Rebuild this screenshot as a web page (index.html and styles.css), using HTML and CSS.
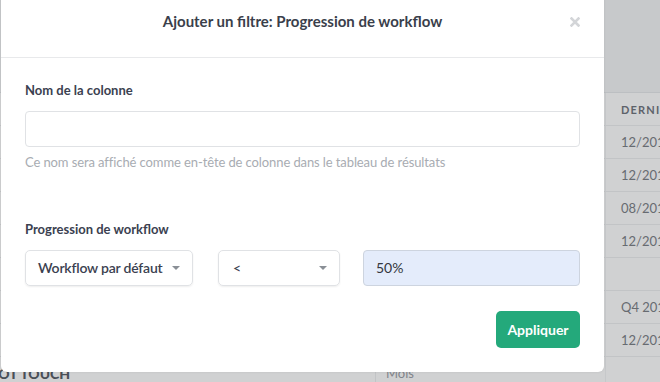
FILE: index.html
```html
<!DOCTYPE html>
<html lang="fr">
<head>
    <meta charset="UTF-8">
    <meta name="viewport" content="width=device-width, initial-scale=1.0">
    <title>Ajouter un filtre</title>
    <link rel="stylesheet" href="styles.css">
</head>
<body>
    <div class="page">
        <div class="band"></div>
        <div class="grid">
            <div class="cell"></div><div class="cell"></div><div class="cell head">Dernière mise à jour</div>
            <div class="cell"></div><div class="cell"></div><div class="cell">12/2018</div>
            <div class="cell"></div><div class="cell"></div><div class="cell">12/2018</div>
            <div class="cell"></div><div class="cell"></div><div class="cell">08/2018</div>
            <div class="cell"></div><div class="cell"></div><div class="cell">12/2018</div>
            <div class="cell"></div><div class="cell"></div><div class="cell"></div>
            <div class="cell"></div><div class="cell"></div><div class="cell">Q4 2018</div>
            <div class="cell"></div><div class="cell"></div><div class="cell">12/2018</div>
            <div class="cell strong">DO NOT TOUCH</div><div class="cell muted">Mois</div><div class="cell"></div>
        </div>
    </div>

    <div class="modal">
        <div class="modal-header">
            <h3>Ajouter un filtre: Progression de workflow</h3>
            <span class="close">
                <svg width="10" height="10" viewBox="0 0 10 10"><path d="M1.5 1.5 L8.5 8.5 M8.5 1.5 L1.5 8.5" stroke="#d3d5d8" stroke-width="2.6" stroke-linecap="square"/></svg>
            </span>
        </div>
        <div class="modal-body">
            <label for="colname">Nom de la colonne</label>
            <input type="text" id="colname" class="field">
            <p class="help">Ce nom sera affiché comme en-tête de colonne dans le tableau de résultats</p>

            <label class="second">Progression de workflow</label>
            <div class="row">
                <div class="select wf">Workflow par défaut <span class="caret"></span></div>
                <div class="select op">&lt; <span class="caret"></span></div>
                <div class="field value">50%</div>
            </div>

            <div class="actions">
                <button type="button">Appliquer</button>
            </div>
        </div>
    </div>
</body>
</html>
```

FILE: styles.css
```css
* {
    box-sizing: border-box;
}
body {
    margin: 0;
    font-family: Lato, "Open Sans", sans-serif;
    background-color: #d0d1d2;
    overflow: hidden;
    height: 382px;
}
.page {
    width: 660px;
}
.band {
    height: 93px;
    background-color: #c7c9cb;
    border-bottom: 1px solid #bcbfc2;
}
.grid {
    display: grid;
    grid-template-columns: 375px 230px 1fr;
}
.cell {
    height: 33px;
    border-bottom: 1px solid #c2c4c6;
    font-size: 13px;
    color: #676b71;
    line-height: 33px;
    padding-left: 15px;
    white-space: nowrap;
    overflow: hidden;
}
.cell:nth-child(3n+2) {
    border-left: 1px solid #c2c4c6;
    padding-left: 10px;
}
.cell:nth-child(3n) {
    border-left: 1px solid #c6c8ca;
}
.cell.head {
    text-transform: uppercase;
    font-size: 11px;
    font-weight: bold;
    letter-spacing: 1.2px;
    color: #5d626a;
}
.cell.strong {
    font-weight: 900;
    font-size: 14px;
    color: #4a4f57;
    padding-left: 0;
    text-indent: -38px;
}
.cell.muted {
    color: #80848a;
}

.modal {
    position: absolute;
    left: 1px;
    top: -8px;
    width: 603px;
    background: #fff;
    border-radius: 6px;
    box-shadow: 0 0 3px rgba(0, 0, 0, 0.08);
}
.modal-header {
    position: relative;
    padding: 19px 0 26px;
    border-bottom: 1px solid #e8e9eb;
    text-align: center;
}
.modal-header h3 {
    margin: 0;
    font-size: 15px;
    line-height: 20px;
    font-weight: bold;
    color: #3a3f4b;
}
.close {
    position: absolute;
    right: 24px;
    top: 25px;
    line-height: 0;
}
.modal-body {
    padding: 23px 24px 24px;
}
label {
    display: block;
    font-size: 13px;
    line-height: 18px;
    font-weight: bold;
    color: #3b4150;
    margin-bottom: 12px;
}
label.second {
    margin-top: 49px;
}
.field {
    display: block;
    width: 555px;
    height: 36px;
    border: 1px solid #e0e2e5;
    border-radius: 4px;
    background: #fff;
    font-family: inherit;
}
.help {
    margin: 6px 0 0;
    font-size: 13px;
    line-height: 18px;
    letter-spacing: -0.1px;
    color: #a8acb2;
}
.row {
    display: flex;
    gap: 25px;
}
.select {
    position: relative;
    height: 36px;
    border: 1px solid #e0e2e5;
    border-radius: 5px;
    box-shadow: 0 1px 2px rgba(0, 0, 0, 0.07);
    font-size: 14px;
    line-height: 34px;
    color: #3b4150;
    font-weight: 600;
    letter-spacing: -0.2px;
    padding-left: 12px;
}
.select.wf {
    width: 168px;
}
.select.op {
    width: 122px;
    padding-left: 14px;
}
.caret {
    position: absolute;
    right: 12px;
    top: 15px;
    width: 0;
    height: 0;
    border-left: 4px solid transparent;
    border-right: 4px solid transparent;
    border-top: 4px solid #8a8f96;
}
.field.value {
    width: 217px;
    margin-left: -2px;
    background: #e4ecfb;
    border-color: #cdd4df;
    font-size: 14px;
    line-height: 34px;
    padding-left: 12px;
    color: #33373d;
}
.actions {
    display: flex;
    justify-content: flex-end;
    margin-top: 25px;
}
button {
    width: 84px;
    height: 37px;
    background-color: #24a97b;
    color: #fff;
    border: none;
    border-radius: 5px;
    font-family: inherit;
    font-size: 14px;
    font-weight: bold;
    cursor: pointer;
}
```
